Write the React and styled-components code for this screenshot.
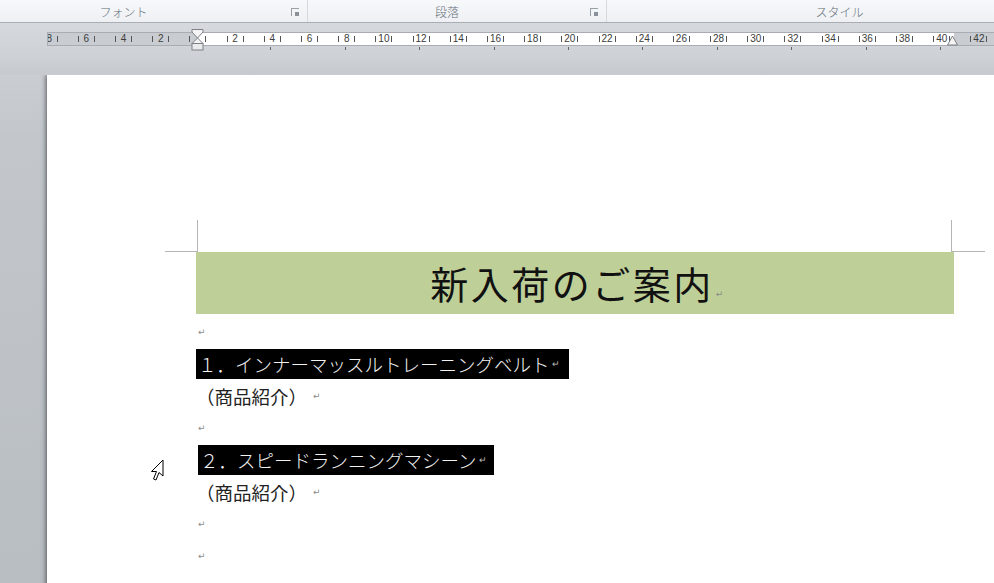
import React from 'react';
import styled, { createGlobalStyle } from 'styled-components';

const UNIT = 18.6;

const GlobalStyle = createGlobalStyle`
  html, body {
    margin: 0;
    padding: 0;
    overflow: hidden;
    background: #c2c6cb;
  }
  body {
    font-family: "Noto Sans CJK JP", "Noto Sans", sans-serif;
  }
`;

const Screen = styled.div`
  width: 994px;
  height: 583px;
  overflow: hidden;
  position: relative;
  display: flex;
  flex-direction: column;
`;

//Ribbon group labels
const RibbonBar = styled.div`
  display: flex;
  height: 22px;
  flex-shrink: 0;
  background: linear-gradient(#f7f8fa, #eef0f3);
  border-bottom: 1px solid #a9aeb5;
  box-shadow: 0 1px 0 #c8ccd1;
`;

const Group = styled.div`
  position: relative;
  width: ${(p) => p.$width}px;
  flex-shrink: 0;
  display: flex;
  align-items: center;
  justify-content: center;
  padding-right: ${(p) => p.$pad || 0}px;
  box-sizing: border-box;
  border-right: 1px solid #d5d8dd;
  font-size: 12px;
  font-weight: 300;
  color: #66707b;
`;

const Launcher = styled.span`
  position: absolute;
  right: 8px;
  top: 8px;
  width: 7px;
  height: 7px;
  border-left: 1px solid #9aa0a8;
  border-top: 1px solid #9aa0a8;
  &::after {
    content: '';
    position: absolute;
    right: 0;
    bottom: 0;
    width: 4px;
    height: 4px;
    background: #8b9199;
  }
`;

const Workspace = styled.div`
  flex: 1;
  display: flex;
  flex-direction: column;
  background: linear-gradient(#cfd2d6, #c3c7cc 20%, #b8bdc2);
`;

//Ruler
const RulerBand = styled.div`
  position: relative;
  height: 52px;
  flex-shrink: 0;
  padding-top: 9px;
  box-sizing: border-box;
  background: linear-gradient(#d6d9dd, #cdd0d4 70%, #c6c9ce);
`;

const Strip = styled.div`
  margin-left: 47px;
  height: 14px;
  overflow: hidden;
  border: 1px solid #a9adb3;
  border-right: none;
  box-sizing: border-box;
  background: linear-gradient(
    to right,
    #c9ccd0 150px,
    #ffffff 150px,
    #ffffff 906px,
    #c9ccd0 906px
  );
`;

const Track = styled.div`
  display: flex;
  margin-left: ${150 - 9 * UNIT}px;
  height: 100%;
`;

const Cell = styled.div`
  width: ${UNIT * 2}px;
  flex-shrink: 0;
  display: grid;
  grid-template-columns: 1fr 15px 1fr;
  align-items: center;
  font-family: "Liberation Sans", sans-serif;
  font-size: 10px;
  line-height: 12px;
  color: #3c3c3c;
  text-align: center;
`;

const Tick = styled.span`
  justify-self: ${(p) => p.$side};
  width: 1px;
  height: 6px;
  background: #555;
`;

const TabMarks = styled.div`
  margin-left: 197px;
  width: 756px;
  height: 3px;
  margin-top: 1px;
  background: repeating-linear-gradient(
    to right,
    transparent 0 ${UNIT * 4 - 1}px,
    #666 ${UNIT * 4 - 1}px ${UNIT * 4}px
  );
`;

const Marker = styled.svg`
  position: absolute;
  left: ${(p) => p.$left}px;
  top: ${(p) => p.$top}px;
`;

//Page
const Page = styled.div`
  flex: 1;
  margin-left: 47px;
  background: #ffffff;
  box-shadow: -2px 0 4px rgba(60, 64, 70, 0.55), 0 -1px 2px rgba(60, 64, 70, 0.3);
  padding: 145px 0 0 149px;
`;

const Content = styled.div`
  width: 758px;
`;

const CropRow = styled.div`
  display: flex;
  justify-content: space-between;
  margin-left: -31px;
  width: 820px;
  height: 32px;
`;

const Corner = styled.div`
  width: ${(p) => p.$w}px;
  height: 31px;
  border-bottom: 1px solid #b5b5b5;
  ${(p) => (p.$right ? 'border-left: 1px solid #b5b5b5;' : 'border-right: 1px solid #b5b5b5;')}
`;

const TitleBand = styled.div`
  height: 62px;
  background: #bfcf98;
  display: flex;
  align-items: center;
  justify-content: center;
  font-size: 38px;
  letter-spacing: 2.5px;
  color: #111;
  line-height: 62px;
  padding-left: 4px;
`;

const Lines = styled.div`
  margin-top: 2px;
  font-size: 18.5px;
  color: #222;
`;

const Line = styled.div`
  height: 32px;
  display: flex;
  align-items: center;
`;

const Highlight = styled.span`
  display: inline-flex;
  align-items: center;
  height: 30px;
  background: #000;
  color: #f2f2f2;
  margin-left: ${(p) => p.$shift || 0}px;
  padding-left: 2px;
  font-weight: 300;
`;

const Return = styled.span`
  display: inline-block;
  width: ${(p) => p.$w || 19}px;
  padding-left: ${(p) => p.$pad || 2}px;
  box-sizing: border-box;
  font-family: "DejaVu Sans", sans-serif;
  font-size: 9px;
  color: ${(p) => (p.$light ? '#bdbdbd' : '#8a8a8a')};
  align-self: ${(p) => (p.$low ? 'flex-end' : 'center')};
  line-height: ${(p) => (p.$low ? '40px' : 'normal')};
  letter-spacing: 0;
`;

const Cursor = styled.svg`
  position: absolute;
  left: 150px;
  top: 459px;
`;

const rulerUnits = [];
for (let u = -8; u <= 44; u += 2) rulerUnits.push(u);

const Ruler = () => (
  <RulerBand>
    <Strip>
      <Track>
        {rulerUnits.map((u) => (
          <Cell key={u}>
            <Tick $side="end" />
            <span>{u === 0 ? '' : Math.abs(u)}</span>
            <Tick $side="start" />
          </Cell>
        ))}
      </Track>
    </Strip>
    <TabMarks />
    <Marker $left={191} $top={6} width="13" height="22" viewBox="0 0 13 22">
      <path d="M1 0.5 H12 V3 L6.5 9 L1 3 Z" fill="#f4f4f4" stroke="#7d8187" />
      <path d="M6.5 9 L12 14.5 H1 Z" fill="#f4f4f4" stroke="#7d8187" />
      <rect x="1" y="14.5" width="11" height="6.5" fill="#e9eaec" stroke="#7d8187" />
    </Marker>
    <Marker $left={947} $top={12} width="11" height="11" viewBox="0 0 11 11">
      <path d="M5.5 1 L10.5 10 H0.5 Z" fill="#f4f4f4" stroke="#7d8187" />
    </Marker>
  </RulerBand>
);

const App = () => (
  <>
    <GlobalStyle />
    <Screen>
      <RibbonBar>
        <Group $width={308} $pad={60}>
          フォント
          <Launcher />
        </Group>
        <Group $width={299} $pad={20}>
          段落
          <Launcher />
        </Group>
        <Group $width={466}>スタイル</Group>
      </RibbonBar>
      <Workspace>
        <Ruler />
        <Page>
          <Content>
            <CropRow>
              <Corner $w={32} />
              <Corner $w={33} $right />
            </CropRow>
            <TitleBand>
              新入荷のご案内
              <Return $w={10} $low>↵</Return>
            </TitleBand>
            <Lines>
              <Line><Return>↵</Return></Line>
              <Line>
                <Highlight>
                  １．インナーマッスルトレーニングベルト
                  <Return $w={19} $light>↵</Return>
                </Highlight>
              </Line>
              <Line>
                （商品紹介）<Return $pad={6} $w={20}>↵</Return>
              </Line>
              <Line><Return>↵</Return></Line>
              <Line>
                <Highlight $shift={2}>
                  ２．スピードランニングマシーン
                  <Return $w={17} $light>↵</Return>
                </Highlight>
              </Line>
              <Line>
                （商品紹介）<Return $pad={6} $w={20}>↵</Return>
              </Line>
              <Line><Return>↵</Return></Line>
              <Line><Return>↵</Return></Line>
              <Line><Return>↵</Return></Line>
            </Lines>
          </Content>
        </Page>
      </Workspace>
      <Cursor width="14" height="24" viewBox="0 0 14 24">
        <path
          d="M13 1 V17 L9 13.5 L6 21 L3.5 20 L6.5 12.5 L1.5 12.5 Z"
          fill="#ffffff"
          stroke="#000000"
          strokeWidth="1"
          strokeLinejoin="miter"
        />
      </Cursor>
    </Screen>
  </>
);

export default App;
